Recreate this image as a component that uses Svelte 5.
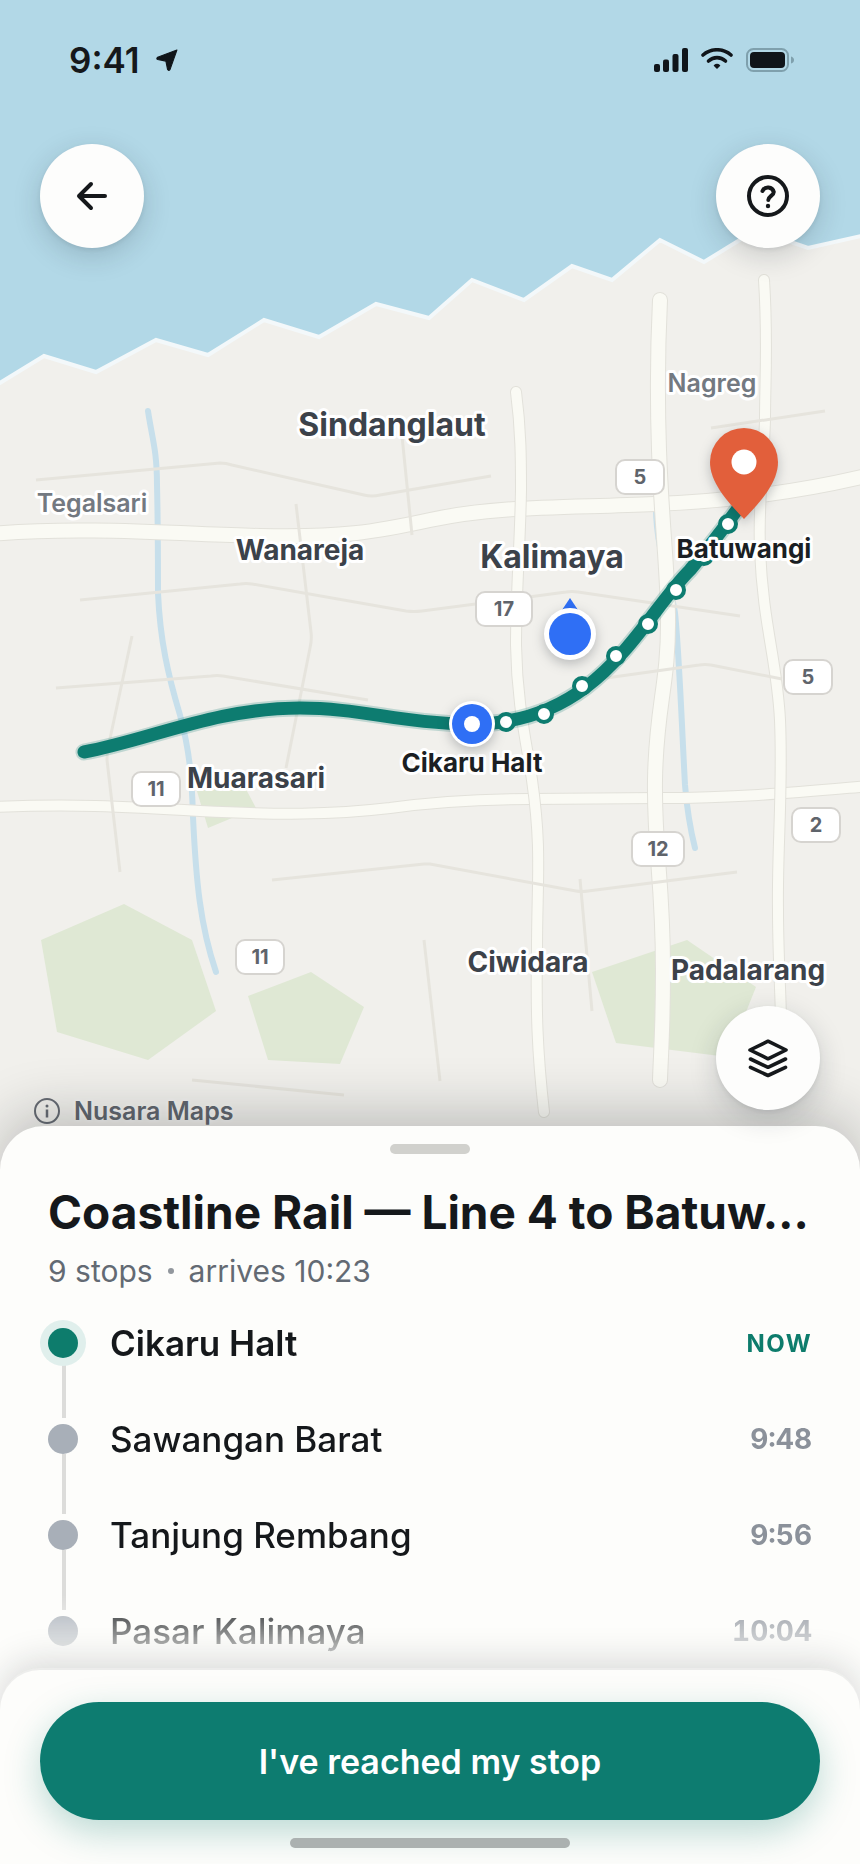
<script>
  const parks = [
    '41,940 124,904 192,940 216,1011 148,1060 57,1032',
    '248,996 311,972 364,1007 340,1064 268,1060',
    '592,972 687,940 756,987 728,1057 616,1043',
    '196,788 240,778 256,808 208,828'
  ];

  const rivers = [
    'M148 411 C152 438 157 450 157 485 C158 525 158 560 158 593 C160 640 168 675 180 715 C190 752 192 780 193 817 C196 880 200 925 216 972',
    'M656 508 C656 550 672 590 675 613 C679 650 682 730 685 785 C687 810 690 828 695 848'
  ];

  const roads = [
    { width: 14, d: 'M-10 534 C80 526 180 534 260 536 C340 538 375 532 430 520 C500 505 570 508 655 504 C730 501 800 492 870 475' },
    { width: 10, d: 'M-10 807 C70 804 120 806 200 811 C280 815 330 815 390 808 C440 801 480 799 530 799 L660 798 C740 798 800 792 870 786' },
    { width: 10, d: 'M516 392 C521 430 521 460 521 490 C520 550 516 590 516 645 C517 705 527 745 532 780 C542 850 537 880 537 950 C536 1010 537 1050 544 1112' },
    { width: 14, d: 'M660 300 C658 340 657 390 659 450 C662 530 667 560 668 615 C669 685 656 705 655 780 C654 850 663 880 663 970 C663 1030 661 1050 660 1080' },
    { width: 10, d: 'M764 280 C768 340 765 380 765 420 C764 460 758 500 760 550 C763 625 777 660 780 720 C783 790 777 850 778 910 C778 960 781 990 782 1060' }
  ];

  const lanes = [
    'M36 480 L220 463 Q226 463 232 465 L364 495 Q372 497 380 495 L491 476',
    'M80 600 L240 584 Q246 583 252 584 L406 611 Q414 612 422 611 L566 592 Q572 591 578 592 L740 616',
    'M56 688 L211 676 Q217 675 223 676 L368 700',
    'M132 636 L108 748 Q107 753 107 760 L120 872',
    'M296 504 L311 632 Q312 640 310 648 L286 768',
    'M400 416 L412 535',
    'M711 428 L825 411',
    'M592 680 L699 665 Q705 664 711 665 L782 679',
    'M272 880 L424 864 L430 864 L576 891 Q582 892 588 891 L737 872',
    'M580 879 L592 1011',
    'M424 940 L440 1081',
    'M192 1080 L344 1095'
  ];

  const route = 'M84 752 C150 740 215 708 300 708 C360 708 405 724 472 724 C600 724 640 620 690 570 C715 540 730 520 744 500';
  const routeStops = [[506, 722], [544, 714], [582, 686], [616, 656], [648, 624], [676, 590], [704, 556], [728, 524]];

  const shields = [
    { x: 640, y: 477, w: 48, n: '5' },
    { x: 504, y: 609, w: 56, n: '17' },
    { x: 808, y: 677, w: 48, n: '5' },
    { x: 156, y: 789, w: 48, n: '11' },
    { x: 260, y: 957, w: 48, n: '11' },
    { x: 816, y: 825, w: 48, n: '2' },
    { x: 658, y: 849, w: 52, n: '12' }
  ];

  const places = [
    { name: 'Sindanglaut', x: 392, y: 436, kind: 'city' },
    { name: 'Kalimaya', x: 552, y: 568, kind: 'city' },
    { name: 'Wanareja', x: 300, y: 560, kind: 'town' },
    { name: 'Muarasari', x: 256, y: 788, kind: 'town' },
    { name: 'Ciwidara', x: 528, y: 972, kind: 'town' },
    { name: 'Padalarang', x: 748, y: 980, kind: 'town' },
    { name: 'Tegalsari', x: 92, y: 512, kind: 'village' },
    { name: 'Nagreg', x: 712, y: 392, kind: 'village' },
    { name: 'Cikaru Halt', x: 472, y: 772, kind: 'station' },
    { name: 'Batuwangi', x: 744, y: 558, kind: 'station' }
  ];

  const stops = [
    { name: 'Cikaru Halt', time: 'NOW', current: true },
    { name: 'Sawangan Barat', time: '9:48' },
    { name: 'Tanjung Rembang', time: '9:56' },
    { name: 'Pasar Kalimaya', time: '10:04' }
  ];
</script>

<div class="screen">
  <section class="map" aria-label="Route map">
    <svg class="canvas" viewBox="0 0 860 1170" preserveAspectRatio="xMidYMin slice">
      <rect width="860" height="1170" fill="#b2d8e7" />
      <path
        d="M-10 389 L44 356 L96 372 L156 340 L208 355 L264 320 L319 337 L376 304 L429 318 L472 280 L524 300 L572 266 L612 280 L660 240 L704 262 L756 230 L808 248 L870 234 V1180 H-10 Z"
        fill="#f1f0ec" stroke="#f3f8fa" stroke-width="4" />
      {#each parks as points}
        <polygon {points} fill="#dfe8d4" />
      {/each}
      {#each rivers as d}
        <path {d} fill="none" stroke="#c7dfeb" stroke-width="6" stroke-linecap="round" />
      {/each}
      {#each roads as road}
        <path d={road.d} fill="none" stroke="#e2e1da" stroke-width={road.width + 2} stroke-linecap="round" />
        <path d={road.d} fill="none" stroke="#fafaf4" stroke-width={road.width} stroke-linecap="round" />
      {/each}
      {#each lanes as d}
        <path {d} fill="none" stroke="#e6e4dd" stroke-width="3" />
      {/each}

      <path d={route} fill="none" stroke="#0d7c70" stroke-opacity="0.22" stroke-width="17" stroke-linecap="round" />
      <path d={route} fill="none" stroke="#0d7c70" stroke-width="13" stroke-linecap="round" />
      {#each routeStops as [x, y]}
        <circle cx={x} cy={y} r="8" fill="#fff" stroke="#0d7c70" stroke-width="4" />
      {/each}

      {#each shields as s}
        <rect x={s.x - s.w / 2} y={s.y - 17} width={s.w} height="34" rx="9" fill="#fff" stroke="#d6d4d0" stroke-width="2" />
        <text class="shield" x={s.x} y={s.y + 7}>{s.n}</text>
      {/each}
      {#each places as p}
        <text class="place {p.kind}" x={p.x} y={p.y}>{p.name}</text>
      {/each}

      <g class="marker">
        <circle cx="472" cy="724" r="23" fill="#fff" />
        <circle cx="472" cy="724" r="20" fill="#2f6ff5" />
        <circle cx="472" cy="724" r="8" fill="#fff" />
      </g>
      <path d="M570 598 L578 610 H562 Z" fill="#2f6ff5" />
      <g class="marker">
        <circle cx="570" cy="634" r="26" fill="#fff" />
        <circle cx="570" cy="634" r="21" fill="#2f6ff5" />
      </g>
      <g class="marker">
        <path d="M744 428 A34 34 0 0 1 778 462 C778 482 762 500 744 519 C726 500 710 482 710 462 A34 34 0 0 1 744 428 Z" fill="#e25f3b" />
        <circle cx="744" cy="462" r="12.500" fill="#fff" />
      </g>
    </svg>

    <header class="status">
      <div class="clock">
        <span>9:41</span>
        <svg width="22" height="22" viewBox="0 0 20 20" aria-hidden="true">
          <path d="M19 1 L1.5 7.5 Q0 9 1.5 9.5 L9 11 L10.5 18.5 Q11.5 20.5 12.8 18.5 Z" fill="#10151a" stroke="#10151a" stroke-linejoin="round" />
        </svg>
      </div>
      <div class="signals">
        <svg width="34" height="24" viewBox="0 0 34 24" fill="#10151a" aria-hidden="true">
          <rect y="16" width="6" height="8" rx="2" />
          <rect x="9" y="11.5" width="6" height="12.5" rx="2" />
          <rect x="18.500" y="6" width="6" height="18" rx="2" />
          <rect x="28" width="6" height="24" rx="2" />
        </svg>
        <svg width="32" height="24" viewBox="0 0 32 24" fill="none" stroke="#10151a" stroke-width="3.6" stroke-linecap="round" aria-hidden="true">
          <path d="M2 7 C10 0 22 0 30 7" />
          <path d="M7.500 13 C12.500 8.500 19.500 8.500 24.500 13" />
          <path d="M13.500 17.500 Q16 15.500 18.500 17.500 L16 20 Z" fill="#10151a" stroke-width="1.500" stroke-linejoin="round" />
        </svg>
        <svg width="48" height="24" viewBox="0 0 48 24" aria-hidden="true">
          <rect x="1" y="1" width="41" height="22" rx="6.500" fill="none" stroke="#7fa0ad" stroke-width="2" />
          <rect x="4" y="4" width="35" height="16" rx="4" fill="#10151a" />
          <path d="M45 8.500 Q48 9.500 48 12 Q48 14.500 45 15.500 Z" fill="#7fa0ad" />
        </svg>
      </div>
    </header>

    <nav class="controls">
      <button class="round" aria-label="Back">
        <svg width="52" height="52" viewBox="-26 -26 52 52" fill="none" stroke="#15181b" stroke-width="4" stroke-linecap="round" stroke-linejoin="round">
          <path d="M13 0 H-13 M-1 -12 L-13 0 L-1 12" />
        </svg>
      </button>
      <button class="round" aria-label="Help">
        <svg width="52" height="52" viewBox="-26 -26 52 52" fill="none" stroke="#15181b" stroke-width="4" stroke-linecap="round" stroke-linejoin="round">
          <circle r="19" />
          <path d="M-5.500 -5 A6 6 0 0 1 5.800 -4 C5.800 -0.500 0.300 0.300 0.300 4" />
          <circle cy="10" r="2.200" fill="#15181b" stroke="none" />
        </svg>
      </button>
    </nav>

    <div class="map-foot">
      <div class="credit">
        <svg width="26" height="26" viewBox="-13 -13 26 26" fill="none" stroke="#666b73" stroke-width="2" aria-hidden="true">
          <circle r="12" />
          <path d="M0 -1.500 V6.500" stroke-width="2.500" />
          <circle cy="-5" r="1.500" fill="#666b73" stroke="none" />
        </svg>
        <span>Nusara Maps</span>
      </div>
      <button class="round layers" aria-label="Map layers">
        <svg width="52" height="52" viewBox="-26 -26 52 52" fill="none" stroke="#15181b" stroke-width="3.600" stroke-linecap="round" stroke-linejoin="round">
          <path d="M0 -16.800 L18 -8 L0 0.800 L-18 -8 Z" />
          <path d="M-17.500 1 L0 9.300 L17.500 1" />
          <path d="M-17.500 9.300 L0 17.500 L17.500 9.300" />
        </svg>
      </button>
    </div>
  </section>

  <section class="sheet">
    <div class="handle"></div>
    <h1>Coastline Rail — Line 4 to Batuw…</h1>
    <p class="summary"><span>9 stops</span><i></i><span>arrives 10:23</span></p>
    <ol class="stops">
      {#each stops as stop}
        <li class:current={stop.current}>
          <span class="dot"></span>
          <span class="name">{stop.name}</span>
          <span class="time">{stop.time}</span>
        </li>
      {/each}
    </ol>
    <footer>
      <button class="primary">I've reached my stop</button>
      <div class="home"></div>
    </footer>
  </section>
</div>

<style>
  :global(body) {
    background: #fdfdfb;
  }

  .screen {
    display: flex;
    flex-direction: column;
    min-height: 100vh;
    overflow: hidden;
    font-family: Inter, 'Noto Sans', sans-serif;
    color: #15181b;
  }

  button {
    border: 0;
    padding: 0;
    font: inherit;
    cursor: pointer;
  }

  .map {
    position: relative;
    flex: 1;
    display: flex;
    flex-direction: column;
    min-height: 900px;
  }

  .canvas {
    position: absolute;
    top: 0;
    left: 0;
    width: 100%;
    height: calc(100% + 44px);
  }

  .shield {
    font-size: 20px;
    font-weight: 700;
    fill: #5f646b;
    text-anchor: middle;
  }

  .place {
    text-anchor: middle;
    paint-order: stroke;
    stroke: #fff;
    stroke-width: 6px;
    stroke-linejoin: round;
    font-weight: 700;
    fill: #3c424a;
  }

  .city {
    font-size: 32px;
  }

  .town {
    font-size: 28px;
  }

  .village {
    font-size: 25px;
    font-weight: 600;
    fill: #737981;
  }

  .station {
    font-size: 26px;
    fill: #1b1f24;
  }

  .marker {
    filter: drop-shadow(0 4px 6px rgba(20, 28, 40, 0.25));
  }

  .status {
    position: relative;
    display: flex;
    justify-content: space-between;
    align-items: center;
    height: 24px;
    padding: 48px 66px 0 69px;
  }

  .clock {
    display: flex;
    align-items: center;
    gap: 16px;
    font-size: 35px;
    font-weight: 600;
    line-height: 24px;
  }

  .signals {
    display: flex;
    align-items: center;
    gap: 13px;
  }

  .controls {
    position: relative;
    display: flex;
    justify-content: space-between;
    padding: 72px 40px 0;
  }

  .round {
    display: grid;
    place-items: center;
    width: 104px;
    height: 104px;
    border-radius: 50%;
    background: #fdfdfc;
    box-shadow: 0 8px 28px rgba(20, 32, 44, 0.18), 0 2px 4px rgba(20, 32, 44, 0.08);
  }

  .map-foot {
    display: flex;
    flex: 1;
    justify-content: space-between;
    align-items: flex-end;
    padding: 0 40px 0 34px;
  }

  .credit {
    position: relative;
    display: flex;
    align-items: center;
    gap: 14px;
    font-size: 25px;
    font-weight: 600;
    line-height: 30px;
    color: #61666e;
    text-shadow: 0 0 4px rgba(255, 255, 255, 0.9);
  }

  .layers {
    position: relative;
    z-index: 2;
    margin-bottom: 16px;
  }

  .sheet {
    position: relative;
    z-index: 1;
    padding-top: 18px;
    border-radius: 44px 44px 0 0;
    background: #fdfdfb;
    box-shadow: 0 -12px 56px rgba(20, 24, 30, 0.24);
  }

  .handle {
    width: 80px;
    height: 10px;
    margin: 0 auto;
    border-radius: 5px;
    background: #d1d1cd;
  }

  h1 {
    margin: 30px 48px 0;
    overflow: hidden;
    font-size: 46px;
    font-weight: 700;
    line-height: 56px;
    white-space: nowrap;
    text-overflow: ellipsis;
  }

  .summary {
    display: flex;
    align-items: center;
    gap: 15px;
    margin: 13px 48px 6px;
    font-size: 30px;
    line-height: 36px;
    color: #636a73;
  }

  .summary i {
    width: 6px;
    height: 6px;
    border-radius: 50%;
    background: #92979d;
  }

  .stops {
    margin: 0;
    padding: 0 48px;
    list-style: none;
    mask-image: linear-gradient(#000 calc(100% - 84px), transparent calc(100% - 8px));
  }

  li {
    position: relative;
    display: flex;
    align-items: center;
    height: 96px;
  }

  li:not(:last-child)::after {
    content: '';
    position: absolute;
    top: 63px;
    left: 14px;
    width: 4px;
    height: 60px;
    background: #dcdcda;
  }

  .dot {
    position: relative;
    z-index: 1;
    width: 30px;
    height: 30px;
    border-radius: 50%;
    background: #a8afb8;
  }

  .name {
    flex: 1;
    padding-left: 32px;
    font-size: 35px;
    font-weight: 500;
  }

  .time {
    font-size: 28px;
    font-weight: 700;
    font-variant-numeric: tabular-nums;
    color: #8b919a;
  }

  .current .dot {
    background: #0d7c6c;
    box-shadow: 0 0 0 8px #e0efec;
  }

  .current .name {
    font-weight: 600;
  }

  .current .time {
    font-size: 24px;
    letter-spacing: 0.06em;
    color: #0d7c6c;
  }

  footer {
    position: relative;
    z-index: 1;
    margin-top: -9px;
    padding: 32px 40px 16px;
    border-radius: 40px 40px 0 0;
    background: #fdfdfb;
    box-shadow: 0 -2px 0 rgba(240, 240, 238, 0.7), 0 -8px 36px rgba(20, 24, 30, 0.16);
  }

  .primary {
    display: block;
    width: 100%;
    height: 118px;
    border-radius: 59px;
    background: #0d7c70;
    box-shadow: 0 12px 36px rgba(13, 124, 112, 0.28);
    color: #fff;
    font-size: 34px;
    font-weight: 600;
  }

  .home {
    position: relative;
    width: 280px;
    height: 10px;
    margin: 18px auto 0;
    border-radius: 5px;
    background: #abb1b0;
  }
</style>
